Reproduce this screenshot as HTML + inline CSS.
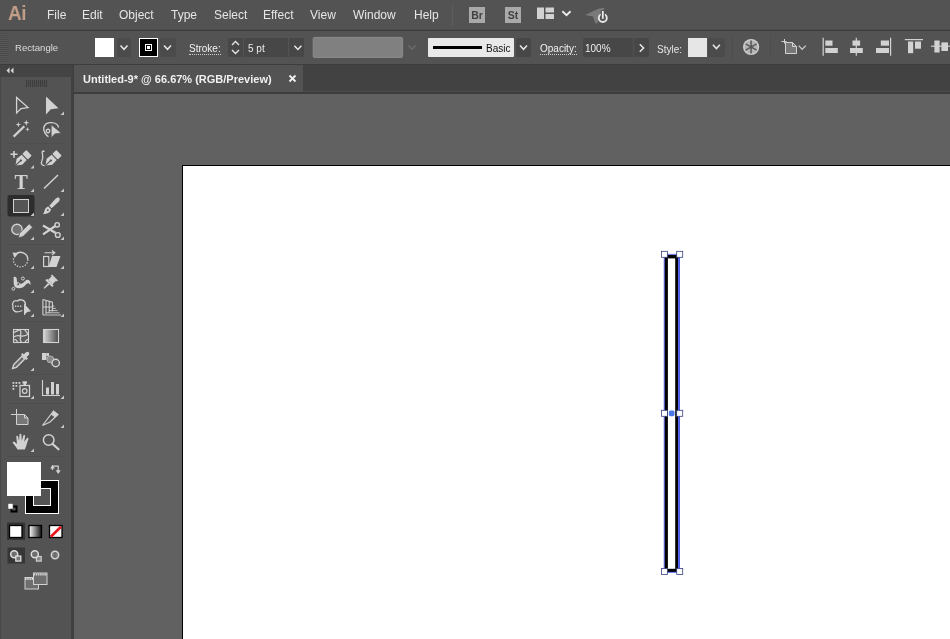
<!DOCTYPE html>
<html>
<head>
<meta charset="utf-8">
<title>Untitled-9* @ 66.67% (RGB/Preview)</title>
<style>
*{box-sizing:border-box;margin:0;padding:0}
html,body{width:950px;height:639px;overflow:hidden;background:#535353;font-family:"Liberation Sans",sans-serif;}
.abs{position:absolute}
#menubar .mi,.lbl,#tabtxt,#ailogo,.gtxt{will-change:transform}
#app{position:relative;width:950px;height:639px;overflow:hidden;background:#535353}
#menubar{left:0;top:0;width:950px;height:31px;background:#535353;border-bottom:1px solid #3b3b3b;box-shadow:inset 0 -1px 0 #4d4d4d}
#menubar .mi{position:absolute;top:8px;font-size:12px;color:#e6e6e6;line-height:14px;white-space:nowrap}
#ailogo{left:8px;top:1px;font-size:21px;font-weight:bold;color:#c49f89;letter-spacing:-0.5px;line-height:24px;transform:scaleX(0.9);transform-origin:0 0}
#ctrlbar{left:0;top:31px;width:950px;height:34px;background:#535353;border-bottom:1px solid #3d3d3d}
.lbl{position:absolute;font-size:10px;color:#dcdcdc;line-height:12px;white-space:nowrap}
.dotted{border-bottom:1px dotted #cfcfcf}
.dd{position:absolute;background:#474747;border-radius:2px}
.field{position:absolute;background:#454545;color:#e2e2e2;font-size:10px;line-height:19px;padding-left:4px}
.sep{position:absolute;width:1px;background:#4d4d4d}
#toolbar{left:0;top:65px;width:74px;height:574px;background:#535353;border-right:3px solid #404040;border-left:1px solid #484848}
#tbhead{left:0;top:65px;width:72px;height:12px;background:#444}
#tabbar{left:74px;top:65px;width:876px;height:29px;background:#424242;border-bottom:2px solid #3d3d3d;box-shadow:inset 0 -1px 0 #4b4b4b}
#tab{left:74px;top:65px;width:229px;height:27px;background:#535353}
#tabtxt{left:83px;top:73px;font-size:11px;font-weight:bold;color:#f0f0f0;line-height:13px;white-space:nowrap}
#canvas{left:74px;top:94px;width:876px;height:545px;background:#616161}
#artboard{left:182px;top:165px;width:780px;height:500px;background:#fff;border:1px solid #000}
</style>
</head>
<body>
<div id="app">
<div id="menubar" class="abs">
<div id="ailogo" class="abs">Ai</div>
<div class="mi" style="left:47px">File</div>
<div class="mi" style="left:82px">Edit</div>
<div class="mi" style="left:119px">Object</div>
<div class="mi" style="left:171px">Type</div>
<div class="mi" style="left:214px">Select</div>
<div class="mi" style="left:263px">Effect</div>
<div class="mi" style="left:310px">View</div>
<div class="mi" style="left:353px">Window</div>
<div class="mi" style="left:414px">Help</div>
</div>
<div class="sep" style="left:452px;top:4px;height:22px;background:#5d5d5d"></div>
<div class="abs gtxt" style="left:469px;top:7px;width:16px;height:16px;background:#a9a9a9;color:#404040;font-size:10.5px;font-weight:bold;line-height:16px;text-align:center">Br</div>
<div class="abs gtxt" style="left:505px;top:7px;width:16px;height:16px;background:#a9a9a9;color:#404040;font-size:10.5px;font-weight:bold;line-height:16px;text-align:center">St</div>
<svg class="abs" style="left:536px;top:7px" width="40" height="16" viewBox="0 0 40 16" ><rect x="1" y="0.5" width="7" height="11.5" fill="#d2d2d2"/><rect x="9.5" y="0.5" width="8.5" height="5" fill="#d2d2d2"/><rect x="9.5" y="7" width="8.5" height="5" fill="#d2d2d2"/><path d="M26.4 4.3 L30.5 8.2 L34.6 4.3" fill="none" stroke="#ececec" stroke-width="1.9"/></svg>

<svg class="abs" style="left:584px;top:4px" width="28" height="24" viewBox="0 0 28 24" ><path d="M1 11 L15 4.5 L21 4 L16 9 L13.5 19 L11.5 19.5 L9 12.5 Z" fill="#7a7a7a"/><circle cx="18.8" cy="14" r="4" fill="none" stroke="#e6e6e6" stroke-width="1.9"/><path d="M18.8 6.5 V14.5" stroke="#535353" stroke-width="4.2"/><path d="M18.8 7 V14.8" stroke="#ececec" stroke-width="1.8"/></svg>

<div id="ctrlbar" class="abs"></div>
<div class="abs" style="left:0px;top:33px;width:8px;height:30px;background:repeating-linear-gradient(#4a4a4a 0 1px,#585858 1px 2px)"></div>
<div class="lbl" style="left:15px;top:42px;font-size:9.6px">Rectangle</div>
<div class="abs" style="left:95px;top:38px;width:19px;height:19px;background:#fff"></div>
<div class="dd" style="left:117px;top:38px;width:14px;height:19px;background:#4b4b4b"></div><svg class="abs" style="left:116px;top:38px" width="16" height="19" viewBox="0 0 16 19" ><path d="M4.5 7.5 L8 11.3 L11.5 7.5" fill="none" stroke="#e8e8e8" stroke-width="1.5"/></svg>

<div class="abs" style="left:139px;top:38px;width:19px;height:19px;background:#000;border:1px solid #fff"></div>
<div class="abs" style="left:145px;top:44px;width:7px;height:7px;border:1px solid #fff;background:#000"></div><div class="abs" style="left:147px;top:46px;width:3px;height:3px;background:#fff"></div>
<div class="dd" style="left:160px;top:38px;width:16px;height:19px;background:#4b4b4b"></div><svg class="abs" style="left:160px;top:38px" width="16" height="19" viewBox="0 0 16 19" ><path d="M4.0 7.5 L7.5 11.3 L11.0 7.5" fill="none" stroke="#e8e8e8" stroke-width="1.5"/></svg>

<div class="lbl dotted" style="left:189px;top:43px;line-height:11px;color:#f2f2f2">Stroke:</div>
<div class="dd" style="left:228px;top:38px;width:76px;height:19px"></div>
<svg class="abs" style="left:228px;top:37px" width="16" height="21" viewBox="0 0 16 21" ><path d="M4 8 L7.5 4.5 L11 8 M4 13 L7.5 16.5 L11 13" fill="none" stroke="#e4e4e4" stroke-width="1.4"/></svg>

<div class="sep" style="left:243px;top:38px;height:19px;background:#535353"></div>
<div class="lbl" style="left:248px;top:43px;color:#ededed">5 pt</div>
<div class="sep" style="left:288px;top:38px;height:19px;background:#535353"></div>
<svg class="abs" style="left:289px;top:37px" width="16" height="21" viewBox="0 0 16 21" ><path d="M5.4 8.7 L8.9 12.5 L12.4 8.7" fill="none" stroke="#e8e8e8" stroke-width="1.5"/></svg>

<svg class="abs" style="left:310px;top:35px" width="96" height="25" viewBox="0 0 96 25" ><rect x="3.2" y="2.4" width="89.4" height="20" rx="1.2" fill="#808080" stroke="#8c8c8c" stroke-width="1"/></svg>

<svg class="abs" style="left:404px;top:37px" width="16" height="21" viewBox="0 0 16 21" ><path d="M4.5 8.4 L8 12.200000000000001 L11.5 8.4" fill="none" stroke="#6c6c6c" stroke-width="1.5"/></svg>

<div class="abs" style="left:428px;top:38px;width:86px;height:19px;background:#e9e9e9;border-radius:1px"></div>
<div class="abs" style="left:433px;top:46px;width:49px;height:3px;background:#000"></div>
<div class="lbl" style="left:486px;top:43px;color:#111">Basic</div>
<div class="dd" style="left:516px;top:38px;width:15px;height:19px"></div><svg class="abs" style="left:516px;top:37px" width="15" height="21" viewBox="0 0 15 21" ><path d="M4.0 8.5 L7.5 12.3 L11.0 8.5" fill="none" stroke="#e8e8e8" stroke-width="1.5"/></svg>

<div class="lbl dotted" style="left:540px;top:43px;line-height:11px;color:#f2f2f2">Opacity:</div>
<div class="dd" style="left:583px;top:38px;width:66px;height:19px"></div>
<div class="lbl" style="left:585px;top:43px;color:#ededed">100%</div>
<div class="sep" style="left:633px;top:38px;height:19px;background:#535353"></div>
<svg class="abs" style="left:634px;top:37px" width="17" height="21" viewBox="0 0 17 21" ><path d="M5.8 7.2 L9.6 11 L5.8 14.8" fill="none" stroke="#e8e8e8" stroke-width="1.5"/></svg>

<div class="lbl" style="left:657px;top:44px;color:#e6e6e6">Style:</div>
<div class="abs" style="left:688px;top:38px;width:19px;height:19px;background:#e6e6e6"></div>
<div class="dd" style="left:708px;top:38px;width:17px;height:19px;background:#4b4b4b"></div><svg class="abs" style="left:709px;top:38px" width="16" height="19" viewBox="0 0 16 19" ><path d="M3.9000000000000004 6.800000000000001 L7.4 10.600000000000001 L10.9 6.800000000000001" fill="none" stroke="#e8e8e8" stroke-width="1.5"/></svg>

<div class="sep" style="left:732px;top:36px;height:23px"></div>
<svg class="abs" style="left:741px;top:37px" width="21" height="21" viewBox="0 0 21 21" ><circle cx="10.1" cy="10" r="8.1" fill="#cdcdcd"/><circle cx="10.1" cy="10" r="6.6" fill="#b4b4b4"/><path d="M11.66 10.90 L15.64 13.20 M10.10 11.80 L10.10 16.40 M8.54 10.90 L4.56 13.20 M8.54 9.10 L4.56 6.80 M10.10 8.20 L10.10 3.60 M11.66 9.10 L15.64 6.80 " stroke="#5c5c5c" stroke-width="1.5"/><circle cx="10.1" cy="10" r="2" fill="#565656"/></svg>

<div class="sep" style="left:770px;top:36px;height:23px"></div>
<svg class="abs" style="left:780px;top:36px" width="28" height="22" viewBox="0 0 28 22" ><path d="M1.5 5.5 H6.5 M4.5 3 V7.5" stroke="#d2d2d2" stroke-width="1"/><path d="M5.5 6.5 H12.5 L16.5 10.5 V17.5 H5.5 Z" fill="#777" stroke="#d2d2d2" stroke-width="1"/><path d="M12.5 6.5 V10.5 H16.5" fill="none" stroke="#d2d2d2" stroke-width="1"/><path d="M18.7 9.6 L22.2 13.4 L25.7 9.6" fill="none" stroke="#cfcfcf" stroke-width="1.3"/></svg>

<svg class="abs" style="left:821px;top:36px" width="20" height="22" viewBox="0 0 20 22" ><path d="M2.2 1.7 V19.7" stroke="#d2d2d2" stroke-width="1.2"/><rect x="4.3" y="4.5" width="7.2" height="5.2" fill="#d2d2d2"/><rect x="4.3" y="12" width="12.5" height="5" fill="#d2d2d2"/></svg>

<svg class="abs" style="left:848px;top:36px" width="20" height="22" viewBox="0 0 20 22" ><path d="M8.3 1.7 V19.7" stroke="#d2d2d2" stroke-width="1.2"/><rect x="4.5" y="4.5" width="7.6" height="5.2" fill="#d2d2d2"/><rect x="2" y="12" width="12.8" height="5" fill="#d2d2d2"/></svg>

<svg class="abs" style="left:873px;top:36px" width="20" height="22" viewBox="0 0 20 22" ><path d="M17.6 1.7 V19.7" stroke="#d2d2d2" stroke-width="1.2"/><rect x="7.8" y="4.5" width="8.2" height="5.2" fill="#d2d2d2"/><rect x="3" y="12" width="13" height="5" fill="#d2d2d2"/></svg>

<svg class="abs" style="left:903px;top:36px" width="24" height="22" viewBox="0 0 24 22" ><path d="M1.8 3.6 H20" stroke="#d2d2d2" stroke-width="1.2"/><rect x="5" y="5.5" width="5.2" height="11.7" fill="#d2d2d2"/><rect x="12" y="5.5" width="6" height="7.2" fill="#d2d2d2"/></svg>

<svg class="abs" style="left:928px;top:36px" width="22" height="22" viewBox="0 0 22 22" ><path d="M3 10.2 H22" stroke="#d2d2d2" stroke-width="1.2"/><rect x="6.4" y="4.5" width="5.2" height="12" fill="#d2d2d2"/><rect x="13.4" y="6.4" width="6.6" height="8.6" fill="#d2d2d2"/></svg>

<div id="tabbar" class="abs"></div><div id="tab" class="abs"></div>
<div id="tabtxt" class="abs">Untitled-9* @ 66.67% (RGB/Preview)</div>
<svg class="abs" style="left:287px;top:73px" width="11" height="11" viewBox="0 0 11 11" ><path d="M2.5 2.5 L8.5 8.5 M8.5 2.5 L2.5 8.5" stroke="#f0f0f0" stroke-width="1.8"/></svg>

<div id="canvas" class="abs"></div><div id="artboard" class="abs"></div>
<svg class="abs" style="left:0px;top:0px" width="950" height="639" viewBox="0 0 950 639" ><rect x="664.4" y="255" width="13.7" height="317" fill="#000"/><rect x="667.9" y="258.4" width="7.3" height="310.4" fill="#fff"/><rect x="664.2" y="254.3" width="15.2" height="318" fill="none" stroke="#4a5ae6" stroke-width="0.9"/><path d="M679 254 V572.5" stroke="#4a5ae6" stroke-width="1.8"/><rect x="661.4" y="251.3" width="6" height="6" fill="#fff" stroke="#35407e" stroke-width="0.8"/><rect x="661.4" y="410.3" width="6" height="6" fill="#fff" stroke="#35407e" stroke-width="0.8"/><rect x="661.4" y="568.5" width="6" height="6" fill="#fff" stroke="#35407e" stroke-width="0.8"/><rect x="676.7" y="251.3" width="6" height="6" fill="#fff" stroke="#35407e" stroke-width="0.8"/><rect x="676.7" y="410.3" width="6" height="6" fill="#fff" stroke="#35407e" stroke-width="0.8"/><rect x="676.7" y="568.5" width="6" height="6" fill="#fff" stroke="#35407e" stroke-width="0.8"/><rect x="668.8" y="410.4" width="5.7" height="5.8" rx="1.6" fill="#4a78e8"/></svg>

<div id="toolbar" class="abs"></div><div id="tbhead" class="abs"></div>
<svg class="abs" style="left:5px;top:66px" width="10" height="9" viewBox="0 0 10 9" ><path d="M4.5 1.5 L1.5 4.5 L4.5 7.5 Z M8.5 1.5 L5.5 4.5 L8.5 7.5 Z" fill="#d8d8d8"/></svg>

<div class="abs" style="left:26px;top:80px;width:21px;height:7px;background:repeating-linear-gradient(90deg,#3c3c3c 0 1px,#515151 1px 2px)"></div>
<svg class="abs gtxt" style="left:0px;top:0px" width="74" height="639" viewBox="0 0 74 639"><path d="M8 143.5 H65" stroke="#4e4e4e" stroke-width="1"/>
<path d="M8 244.5 H65" stroke="#4e4e4e" stroke-width="1"/>
<path d="M8 321.5 H65" stroke="#4e4e4e" stroke-width="1"/>
<path d="M8 374.5 H65" stroke="#4e4e4e" stroke-width="1"/>
<path d="M8 403.5 H65" stroke="#4e4e4e" stroke-width="1"/>
<path d="M8 456.5 H65" stroke="#4e4e4e" stroke-width="1"/>
<path d="M16.6 97.5 V113 L21 108.6 L28 107.6 Z" fill="none" stroke="#d2d2d2" stroke-width="1.3" stroke-linejoin="miter"/>
<path d="M46 96.5 V114.5 L50.8 109.2 L58.5 108.2 Z" fill="#d2d2d2"/>
<path d="M64 111.5 V115 H60.5 Z" fill="#c8c8c8"/>
<path d="M13.6 136.6 L24.3 126.3" stroke="#d2d2d2" stroke-width="2.2"/>
<path d="M18.30 121.70 L18.96 123.94 L21.20 124.60 L18.96 125.26 L18.30 127.50 L17.64 125.26 L15.40 124.60 L17.64 123.94 Z M26.30 119.70 L27.00 122.10 L29.40 122.80 L27.00 123.50 L26.30 125.90 L25.60 123.50 L23.20 122.80 L25.60 122.10 Z M27.50 126.90 L28.04 128.76 L29.90 129.30 L28.04 129.84 L27.50 131.70 L26.96 129.84 L25.10 129.30 L26.96 128.76 Z" fill="#d2d2d2"/>
<path d="M58.5 127.5 C58 121.5 45.5 120.5 43.8 127.5 C43 131 46 135.5 48.5 136.6 M50 130.5 C48.5 128 45.5 129.5 46.5 131.8 C47.3 133.5 49.8 133 50 130.5" fill="none" stroke="#d2d2d2" stroke-width="1.4"/>
<path d="M51.2 124.8 V137.8 L54.8 133.9 L61.2 133 Z" fill="#d2d2d2" stroke="#535353" stroke-width="0.7"/>
<path d="M10.5 154.3 H17.5 M14 151 V157.7" stroke="#d2d2d2" stroke-width="1.6"/>
<g transform="translate(15.5 165.5) rotate(-43) scale(1.08 1.15)"><path d="M0 0 L3.6 -5 L3.2 -11 H-3.2 L-3.6 -5 Z" fill="#d2d2d2" transform="rotate(90)"/><rect x="12" y="-3.4" width="5.2" height="6.8" rx="0.8" fill="#d2d2d2"/><path d="M0 0 H6.5" stroke="#535353" stroke-width="0.9"/><circle cx="6.8" cy="0" r="1" fill="#535353"/></g>
<path d="M34 165.0 V168.5 H30.5 Z" fill="#c8c8c8"/>
<path d="M44.3 152 C43.5 150.5 42 150.8 42.2 152.5 C42.6 155.5 43.6 157.5 42 160.5 C40.5 163.5 42 165.8 44.6 165.6" fill="none" stroke="#d2d2d2" stroke-width="1.3"/>
<g transform="translate(45.5 165.5) rotate(-43) scale(1.08 1.15)"><path d="M0 0 L3.6 -5 L3.2 -11 H-3.2 L-3.6 -5 Z" fill="#d2d2d2" transform="rotate(90)"/><rect x="12" y="-3.4" width="5.2" height="6.8" rx="0.8" fill="#d2d2d2"/><path d="M0 0 H6.5" stroke="#535353" stroke-width="0.9"/><circle cx="6.8" cy="0" r="1" fill="#535353"/></g>
<text x="21.2" y="188.6" font-family="Liberation Serif, serif" font-size="20" font-weight="bold" text-anchor="middle" fill="#d2d2d2">T</text>
<path d="M34 188.5 V192 H30.5 Z" fill="#c8c8c8"/>
<path d="M44 188.5 L58 175" stroke="#d2d2d2" stroke-width="1.5"/>
<path d="M64 188.5 V192 H60.5 Z" fill="#c8c8c8"/>
<rect x="7.5" y="195" width="27" height="21.5" rx="2" fill="#2d2d2d"/>
<rect x="13.5" y="199.5" width="15" height="13" fill="#555" stroke="#d2d2d2" stroke-width="1"/>
<path d="M34 212.5 V216 H30.5 Z" fill="#c8c8c8"/>
<path d="M59.3 197.9 C58.2 196.9 56.4 197.8 55.3 199 L49.3 205.8 L51.6 208.2 L58.4 202 C59.6 200.8 60.3 198.9 59.3 197.9 Z" fill="#d2d2d2"/>
<path d="M48.4 206.6 L50.9 209.2 C51 212 47.5 214 43 214.2 C45 212 44 207.8 48.4 206.6 Z" fill="#d2d2d2"/><circle cx="47.8" cy="210.2" r="0.9" fill="#535353"/>
<path d="M64 212.5 V216 H60.5 Z" fill="#c8c8c8"/>
<circle cx="17" cy="229.4" r="5.2" fill="#727272" stroke="#d2d2d2" stroke-width="1.4"/>
<path d="M18.2 238 L19.6 233.2 L29.2 223.8 L32.6 227.2 L23 236.6 Z" fill="#d2d2d2" stroke="#535353" stroke-width="0.8"/>
<path d="M34 236.5 V240 H30.5 Z" fill="#c8c8c8"/>
<path d="M43 225.5 L55.8 233 M43 234.3 L55.3 226" stroke="#d2d2d2" stroke-width="2.2"/>
<circle cx="57.2" cy="224.8" r="2.2" fill="none" stroke="#d2d2d2" stroke-width="1.4"/><circle cx="57.8" cy="235" r="2.4" fill="none" stroke="#d2d2d2" stroke-width="1.4"/>
<path d="M64 236.5 V240 H60.5 Z" fill="#c8c8c8"/>
<path d="M15.5 254.5 A7.2 7.2 0 0 1 27.8 259.5" fill="none" stroke="#d2d2d2" stroke-width="1.4"/>
<path d="M27.8 259.5 A7.2 7.2 0 1 1 13.6 258" fill="none" stroke="#d2d2d2" stroke-width="1.3" stroke-dasharray="1.4 1.4"/>
<path d="M12.5 252.5 L18.5 253 L14.5 258 Z" fill="#d2d2d2"/>
<path d="M34 265.5 V269 H30.5 Z" fill="#c8c8c8"/>
<path d="M44.5 252.8 H54 M52 250.5 L54.8 252.8 L52 255" fill="none" stroke="#d2d2d2" stroke-width="1.1"/>
<rect x="43.6" y="256.5" width="5.2" height="10" fill="none" stroke="#d2d2d2" stroke-width="1.2"/>
<path d="M52 256 H60.5 L56.5 267 H48.5 Z" fill="#d2d2d2"/>
<path d="M64 265.5 V269 H60.5 Z" fill="#c8c8c8"/>
<path d="M13.6 277 C15.4 276 17 277.2 16.8 279.5 C16.6 282 18.5 284.2 21 283.8 C23.6 283.4 24.2 281.2 26 280.2 C28.4 279 30.8 280.8 30.6 285.2 C29.2 282.8 27.6 282.6 26.4 284 C24 287.6 19.5 289.4 15.8 287.6 C13 286 13.8 281 13.6 277 Z" fill="#d2d2d2"/>
<circle cx="13.4" cy="288.8" r="1.4" fill="#535353" stroke="#d2d2d2" stroke-width="1"/><circle cx="22.9" cy="278.5" r="1.5" fill="#535353" stroke="#d2d2d2" stroke-width="1"/><circle cx="18.2" cy="284.2" r="1.4" fill="#535353" stroke="#d2d2d2" stroke-width="0.9"/>
<path d="M34 289.5 V293 H30.5 Z" fill="#c8c8c8"/>
<g transform="translate(49.2 283.2) rotate(45) scale(0.82)"><rect x="-3.8" y="-8.5" width="7.6" height="6.5" fill="#d2d2d2"/><path d="M-5.8 -2 H5.8 V0.8 H-5.8 Z" fill="#d2d2d2"/><path d="M-1.3 0.8 H1.3 L0.7 9 H-0.7 Z" fill="#d2d2d2"/><path d="M-5.2 -10 H5.2 V-8 H-5.2 Z" fill="#d2d2d2"/></g>
<path d="M64 289.5 V293 H60.5 Z" fill="#c8c8c8"/>
<path d="M25.5 305 C25.5 300 20.5 298.5 17.5 301 C14 299.5 11.5 303 13 306.5 C12 310 15.5 313 19.5 311.5 L22.5 310.5" fill="none" stroke="#d2d2d2" stroke-width="1.3"/>
<path d="M15 306.3 H22.5" stroke="#d2d2d2" stroke-width="1.4" stroke-dasharray="1.3 1.2"/>
<path d="M24 303.5 V315.5 L27.2 312 L31 311.3 Z" fill="#d2d2d2"/>
<path d="M34 313.5 V317 H30.5 Z" fill="#c8c8c8"/>
<path d="M42.9 299.5 V315 M42.9 299.5 L52.4 302.2 V311.6 M46 300.4 V314 M49.2 301.3 V313 M42.9 307 L52.4 306.8" fill="none" stroke="#d2d2d2" stroke-width="1.1"/>
<path d="M42.9 315 H61 M46 312.8 H59.5 M49 310.6 H57.5 M52.4 308.4 H55.8 M52.4 306 H54.4" fill="none" stroke="#d2d2d2" stroke-width="0.9"/>
<path d="M64 313.5 V317 H60.5 Z" fill="#c8c8c8"/>
<rect x="13.5" y="329.5" width="15" height="13" fill="#5c5c5c" stroke="#d2d2d2" stroke-width="1.1"/>
<path d="M14 337 C18 333 22 339 28.5 334 M20 329.5 C23 334 18 338 21.5 342.5 M14 332.5 C17 331 18 330.5 20 329.5 M24.5 329.5 C26 332 27 333 28.5 334 M14 340 C16 339 17 340.5 17.5 342.5 M25 342.5 C25.5 340.5 27 339.5 28.5 339" fill="none" stroke="#d2d2d2" stroke-width="1.25"/>
<defs><linearGradient id="gr1" x1="0" x2="1" y1="0" y2="0"><stop offset="0" stop-color="#d8d8d8"/><stop offset="1" stop-color="#4a4a4a"/></linearGradient><linearGradient id="gr2" x1="0" x2="1" y1="0" y2="0"><stop offset="0" stop-color="#ffffff"/><stop offset="1" stop-color="#111"/></linearGradient></defs>
<rect x="43.5" y="329.5" width="15" height="13" fill="url(#gr1)" stroke="#d2d2d2" stroke-width="1.1"/>
<path d="M12.6 368.4 L13.7 364.6 L22 356.3 L24.7 359 L16.4 367.3 Z" fill="#6a6a6a" stroke="#d2d2d2" stroke-width="1.4"/>
<path d="M21 354.5 L26.5 360 L28 358.5 L26.5 357 C29 355.5 30 353.5 28.8 352.3 C27.6 351.1 25.5 352 24 354.5 L22.5 353 Z" fill="#d2d2d2"/>
<path d="M34 367.5 V371 H30.5 Z" fill="#c8c8c8"/>
<rect x="42" y="353" width="4.5" height="7" fill="#d2d2d2"/><rect x="46.5" y="353" width="2.5" height="3" fill="#d2d2d2"/>
<circle cx="50.3" cy="359.4" r="3.4" fill="#8a8a8a" stroke="#b4b4b4" stroke-width="1"/>
<circle cx="55.7" cy="363" r="3.7" fill="#5e5e5e" stroke="#d2d2d2" stroke-width="1.4"/>
<rect x="12.5" y="382" width="1.8" height="1.8" fill="#d2d2d2"/>
<rect x="15.5" y="382" width="1.8" height="1.8" fill="#d2d2d2"/>
<rect x="18.5" y="382" width="1.8" height="1.8" fill="#d2d2d2"/>
<rect x="12.5" y="385" width="1.8" height="1.8" fill="#d2d2d2"/>
<rect x="15.5" y="385" width="1.8" height="1.8" fill="#d2d2d2"/>
<rect x="12.5" y="388" width="1.8" height="1.8" fill="#d2d2d2"/>
<rect x="20" y="385.5" width="9.5" height="11" fill="none" stroke="#d2d2d2" stroke-width="1.3"/><rect x="22.5" y="381.3" width="4.5" height="2.2" fill="#d2d2d2"/><rect x="23.5" y="383" width="2.5" height="2.5" fill="#d2d2d2"/><circle cx="24.7" cy="391" r="2.3" fill="none" stroke="#d2d2d2" stroke-width="1.2"/>
<path d="M34 395.5 V399 H30.5 Z" fill="#c8c8c8"/>
<path d="M42.5 380 V395.5 H60" fill="none" stroke="#d2d2d2" stroke-width="1.1"/><rect x="46" y="387.5" width="3" height="7" fill="#d2d2d2"/><rect x="51" y="382" width="3" height="12.5" fill="#d2d2d2"/><rect x="56" y="384" width="3" height="10.5" fill="#d2d2d2"/>
<path d="M64 395.5 V399 H60.5 Z" fill="#c8c8c8"/>
<path d="M11 414.5 H16.5 M16.5 409 V414.5" stroke="#d2d2d2" stroke-width="1"/>
<path d="M16.5 414.5 H24.5 L28 418 V424.5 H16.5 Z" fill="#777" stroke="#d2d2d2" stroke-width="1"/><path d="M24.5 414.5 V418 H28" fill="none" stroke="#d2d2d2" stroke-width="1"/>
<path d="M42.5 425.5 L53.5 411 L58 414.5 L50 422 Z" fill="none" stroke="#d2d2d2" stroke-width="1.2"/><path d="M53.5 411 L58 414.5 L55 417.5 L51 414.5 Z" fill="#d2d2d2"/>
<path d="M64 424.5 V428 H60.5 Z" fill="#c8c8c8"/>
<path d="M17.5 449.5 C16 446.5 14 444.5 12.8 443 C12.3 441.8 13.8 441.2 15 442.2 L17 444 L16.3 436.8 C16.2 435.5 17.9 435.4 18.1 436.6 L19 441 L19.5 434.8 C19.6 433.5 21.4 433.5 21.4 434.8 L21.7 441 L23.3 435.6 C23.7 434.4 25.3 434.8 25.1 436 L24.3 441.8 L26.8 438.3 C27.5 437.3 28.9 438 28.4 439.2 C27 442.5 26.5 446 24.8 449.5 Z" fill="#d2d2d2"/>
<path d="M34 448.5 V452 H30.5 Z" fill="#c8c8c8"/>
<circle cx="48.7" cy="440" r="5.3" fill="none" stroke="#d2d2d2" stroke-width="1.5"/><path d="M52.6 444 L58.5 449.3" stroke="#d2d2d2" stroke-width="2.2" stroke-linecap="round"/>
<rect x="25.5" y="480.5" width="33" height="33" fill="#000" stroke="#fff" stroke-width="1"/>
<rect x="33.5" y="488.5" width="17" height="17" fill="#535353" stroke="#fff" stroke-width="1"/>
<rect x="7" y="462" width="34" height="34" fill="#fff"/>
<path d="M52.5 470 V466.2 H58.2 V471.5" fill="none" stroke="#d2d2d2" stroke-width="1.2"/><path d="M50.2 468.6 L52.5 465 L54.8 468.6 Z M55.7 470.3 L58.2 474 L60.7 470.3 Z" fill="#d2d2d2"/>
<rect x="11.5" y="506.5" width="5" height="5" fill="none" stroke="#000" stroke-width="2"/><rect x="8" y="503.5" width="5" height="5.5" fill="#fff" stroke="#535353" stroke-width="0.6"/>
<rect x="7" y="522.5" width="18" height="17.5" fill="#333"/>
<rect x="9.5" y="525.5" width="12.5" height="12" fill="#fff" stroke="#000" stroke-width="1.3"/>
<rect x="29" y="525.5" width="12.5" height="12" fill="url(#gr2)" stroke="#000" stroke-width="1.3"/>
<rect x="49.5" y="525.5" width="12.5" height="12" fill="#fff" stroke="#000" stroke-width="1.3"/><path d="M50.8 536.8 L61 526.8" stroke="#e8141e" stroke-width="2.6"/>
<rect x="7.5" y="547.5" width="17.5" height="16" fill="#363636"/>
<circle cx="14.2" cy="554.3" r="3.5" fill="#6e6e6e" stroke="#dedede" stroke-width="1.5"/><rect x="15.799999999999999" y="556.0999999999999" width="5" height="5" fill="#777" stroke="#dedede" stroke-width="1.3"/>
<rect x="36.4" y="556.5" width="4.8" height="4.6" fill="#888" stroke="#cfcfcf" stroke-width="1.2"/><circle cx="34.8" cy="554.3" r="3.5" fill="#6e6e6e" stroke="#dedede" stroke-width="1.5"/>
<circle cx="55" cy="555" r="3.7" fill="#7a7a7a" stroke="#d4d4d4" stroke-width="1.5"/><path d="M55 552 V558" stroke="#5e5e5e" stroke-width="1"/>
<rect x="25" y="577.5" width="13.5" height="11.5" fill="#6e6e6e" stroke="#d2d2d2" stroke-width="1"/><path d="M25 579 H38.5" stroke="#d2d2d2" stroke-width="2" stroke-dasharray="1.5 0.7"/>
<rect x="33.5" y="573" width="13.5" height="11.5" fill="#6e6e6e" stroke="#d2d2d2" stroke-width="1"/><path d="M33.5 574.5 H47" stroke="#d2d2d2" stroke-width="2" stroke-dasharray="1.5 0.7"/></svg>

</div>
</body>
</html>
